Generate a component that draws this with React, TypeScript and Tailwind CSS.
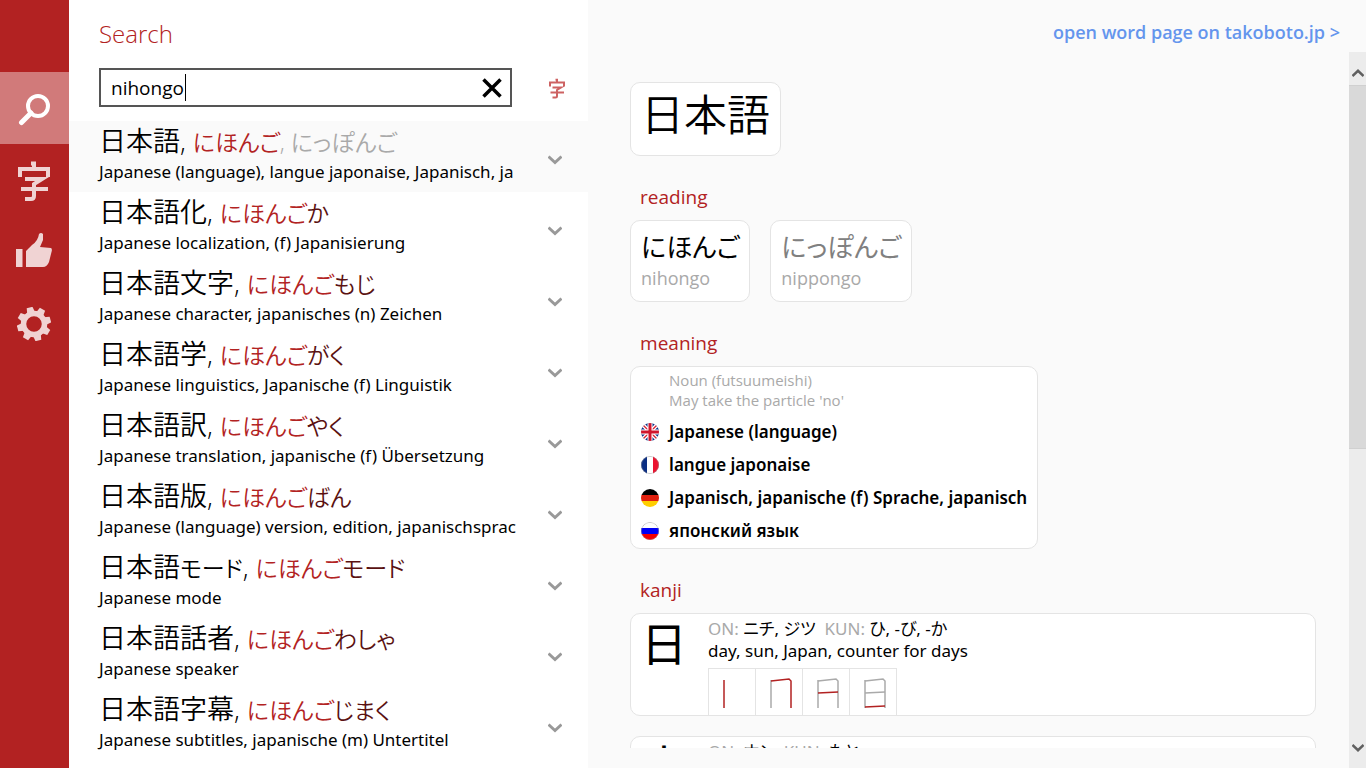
import { useState } from "react";

const WORDS = [
  { kanji: "日本語", match: "にほんご", rest: "", alt: "にっぽんご", meaning: "Japanese (language), langue japonaise, Japanisch, ja" },
  { kanji: "日本語化", match: "にほんご", rest: "か", meaning: "Japanese localization, (f) Japanisierung" },
  { kanji: "日本語文字", match: "にほんご", rest: "もじ", meaning: "Japanese character, japanisches (n) Zeichen" },
  { kanji: "日本語学", match: "にほんご", rest: "がく", meaning: "Japanese linguistics, Japanische (f) Linguistik" },
  { kanji: "日本語訳", match: "にほんご", rest: "やく", meaning: "Japanese translation, japanische (f) Übersetzung" },
  { kanji: "日本語版", match: "にほんご", rest: "ばん", meaning: "Japanese (language) version, edition, japanischsprac" },
  { kanji: "日本語", suffix: "モード", match: "にほんご", rest: "モード", meaning: "Japanese mode" },
  { kanji: "日本語話者", match: "にほんご", rest: "わしゃ", meaning: "Japanese speaker" },
  { kanji: "日本語字幕", match: "にほんご", rest: "じまく", meaning: "Japanese subtitles, japanische (m) Untertitel" },
];

const READINGS = [
  { kana: "にほんご", romaji: "nihongo", color: "text-black" },
  { kana: "にっぽんご", romaji: "nippongo", color: "text-[#808080]" },
];

const MEANINGS = [
  { flag: "gb", text: "Japanese (language)" },
  { flag: "fr", text: "langue japonaise" },
  { flag: "de", text: "Japanisch, japanische (f) Sprache, japanisch" },
  { flag: "ru", text: "японский язык" },
];

// stroke order of 日
const STROKES = ["M15 11V39", "M15 12L33 10L35 12V39", "M15 24L35 23", "M15 38L35 37"];

/* ICONS */
function KanjiIcon({ className }: { className?: string }) {
  return (
    <svg viewBox="0 -4 34 44" className={className} fill="none" stroke="currentColor" strokeWidth="4" aria-hidden="true">
      <path d="M14 1.500H17V7M3 15V7H31V15M8 17H25L17 22V34Q17 37 14 37H8M4 27H31" />
    </svg>
  );
}

function SearchIcon() {
  return (
    <svg viewBox="0 -4 32 36" className="h-9 w-8" fill="none" stroke="currentColor" aria-hidden="true">
      <circle cx="20" cy="12" r="10" strokeWidth="4" />
      <path d="M13 19L3.500 28.500" strokeWidth="5" strokeLinecap="round" />
    </svg>
  );
}

function ThumbIcon() {
  return (
    <svg viewBox="0 0 36 38" className="h-[38px] w-9" fill="currentColor" aria-hidden="true">
      <path d="M0 16H6.500V34H0Z" />
      <path d="M10 34V18L16 12Q22 8 23 1Q25 -1 27 1V7L24 14L35 15Q36.500 16 35.500 19L33 29Q31 34 27 34Z" />
    </svg>
  );
}

function GearIcon() {
  return (
    <svg viewBox="-17 -17 34 34" className="size-[34px]" fill="currentColor" aria-hidden="true">
      <circle r="10.500" fill="none" stroke="currentColor" strokeWidth="5.500" />
      {[-15, 30, 75, 120, 165, 210, 255, 300].map((a) => (
        <path key={a} d="M-4 -11L-3 -17H3L4 -11Z" transform={`rotate(${a})`} />
      ))}
    </svg>
  );
}

function Chevron({ className }: { className?: string }) {
  return (
    <svg viewBox="0 0 14 10" className={className} fill="none" stroke="currentColor" strokeWidth="3" aria-hidden="true">
      <path d="M0.500 1.500L7 7.500L13.500 1.500" />
    </svg>
  );
}

function Flag({ code }: { code: string }) {
  return (
    <svg viewBox="0 0 18 18" className="size-[18px] shrink-0 overflow-hidden rounded-full" role="img" aria-label={code}>
      {code === "gb" && (
        <>
          <rect width="18" height="18" fill="#0a2f86" />
          <path d="M0 0L18 18M18 0L0 18" stroke="#fff" strokeWidth="4" />
          <path d="M0 0L18 18M18 0L0 18" stroke="#d8202f" strokeWidth="1.300" />
          <path d="M9 0V18M0 9H18" stroke="#fff" strokeWidth="5" />
          <path d="M9 0V18M0 9H18" stroke="#d0142c" strokeWidth="3" />
        </>
      )}
      {code === "fr" && (
        <>
          <rect width="18" height="18" fill="#fff" />
          <rect width="6" height="18" fill="#0b2f83" />
          <rect x="12" width="6" height="18" fill="#ec1330" />
        </>
      )}
      {code === "de" && (
        <>
          <rect width="18" height="6" />
          <rect y="6" width="18" height="6" fill="#e1200f" />
          <rect y="12" width="18" height="6" fill="#ffce00" />
        </>
      )}
      {code === "ru" && (
        <>
          <rect width="18" height="18" fill="#fff" />
          <rect y="6" width="18" height="6" fill="#0000f5" />
          <rect y="12" width="18" height="6" fill="#f50000" />
        </>
      )}
      {(code === "fr" || code === "ru") && <circle cx="9" cy="9" r="8.700" fill="none" stroke="#999" strokeWidth="0.600" />}
    </svg>
  );
}

const NAV = [
  { label: "Search", icon: <SearchIcon /> },
  { label: "Kanji", icon: <KanjiIcon className="h-11 w-[34px]" /> },
  { label: "Rate", icon: <ThumbIcon /> },
  { label: "Settings", icon: <GearIcon /> },
];

function SectionTitle({ children }: { children: string }) {
  return <h2 className="px-[10px] text-[19px] leading-6 text-[#b22222]">{children}</h2>;
}

export default function App() {
  const [query, setQuery] = useState("nihongo");

  return (
    <div className="flex h-screen overflow-hidden bg-[#fafafa] font-['Open_Sans','Noto_Sans_CJK_JP',sans-serif] text-black">

      {/* SIDE BAR */}
      <nav className="flex w-[69px] shrink-0 flex-col bg-[#b22222] pt-[72px]">
        {NAV.map((item, i) => (
          <button
            key={item.label}
            aria-label={item.label}
            className={`flex h-[72px] items-center justify-center pr-[2px] ${i === 0 ? "bg-[#d17a7a] text-white" : "text-[#f0d3d3]"}`}
          >
            {item.icon}
          </button>
        ))}
      </nav>

      {/* SEARCH */}
      <section className="flex w-[38%] shrink-0 flex-col overflow-hidden bg-white">
        <h1 className="px-[30px] pt-[18px] text-[24px] leading-8 font-light text-[#b22222]">Search</h1>

        <div className="mt-[18px] mb-[14px] flex items-center pr-[21px] pl-[30px]">
          <div className="relative flex h-[39px] flex-1 items-center border-2 border-[#555]">
            <input
              type="text"
              aria-label="Search word"
              value={query}
              onChange={(e) => setQuery(e.target.value)}
              className="min-w-0 flex-1 bg-transparent px-[10px] text-[19px] leading-6 caret-transparent outline-none"
            />
            <span className="absolute left-[84px] h-[27px] w-px bg-black" />
            <button aria-label="Clear" onClick={() => setQuery("")} className="flex w-9 justify-center">
              <svg viewBox="0 0 20 20" className="size-5" stroke="currentColor" strokeWidth="3.500" aria-hidden="true">
                <path d="M1.500 1.500L18.500 18.500M18.500 1.500L1.500 18.500" />
              </svg>
            </button>
          </div>
          <button aria-label="Kanji search" className="ml-[35px] flex w-5 justify-center text-[#cd6262]">
            <KanjiIcon className="h-[22px] w-[18px]" />
          </button>
        </div>

        <ul>
          {WORDS.map((w, i) => (
            <li key={w.meaning} className={`flex items-center pr-[26px] pb-2 pl-[30px] ${i === 0 ? "bg-[#fafafa]" : ""}`}>
              <div className="min-w-0 flex-1 whitespace-nowrap">
                <p className="flex h-[39px] items-baseline text-[23px] leading-10 font-[350] whitespace-pre [font-feature-settings:'palt']">
                  <span className="text-[27px]">{w.kanji}</span>
                  {w.suffix}
                  <span className="text-[27px]">, </span>
                  <span className="text-[#b22222]">{w.match}</span>
                  <span className="text-[#5a1111]">{w.rest}</span>
                  {w.alt && <span className="text-[#a9a9a9]">, {w.alt}</span>}
                </p>
                <p className="font-['Noto_Sans',sans-serif] text-[17px] leading-6">{w.meaning}</p>
              </div>
              <button aria-label="Expand" className="ml-4 flex w-[14px] justify-center pt-[14px] text-[#999]">
                <Chevron className="h-[10px] w-[14px]" />
              </button>
            </li>
          ))}
        </ul>
      </section>

      {/* WORD DETAILS */}
      <main className="flex min-w-0 flex-1 flex-col">
        <header className="flex h-[52px] shrink-0 justify-end pt-5 pr-[26px]">
          <a href="#" className="text-lg leading-6 font-semibold text-[#6495ed]">open word page on takoboto.jp &gt;</a>
        </header>

        <div className="flex min-h-0 flex-1">
          <div className="mb-5 min-w-0 flex-1 overflow-hidden pt-[30px] pr-[33px] pl-[42px]">
            <div className="flex">
              <p className="rounded-[10px] border border-[#e4e4e4] bg-white px-[10px] pt-[3px] pb-[11px] text-[43px] leading-[58px] font-[350]">日本語</p>
            </div>

            <div className="mt-[29px]">
              <SectionTitle>reading</SectionTitle>
              <div className="mt-[11px] flex gap-5">
                {READINGS.map((r) => (
                  <div key={r.romaji} className="rounded-[10px] border border-[#e4e4e4] bg-white px-[10px] pt-[7px] pb-[11px]">
                    <p className={`text-[26px] leading-[38px] [font-feature-settings:'palt'] ${r.color}`}>{r.kana}</p>
                    <p className="text-lg leading-6 text-[#a9a9a9]">{r.romaji}</p>
                  </div>
                ))}
              </div>
            </div>

            <div className="mt-[29px]">
              <SectionTitle>meaning</SectionTitle>
              <div className="mt-[11px] flex">
                <div className="rounded-[10px] border border-[#e4e4e4] bg-white px-[10px] pt-[3px] pb-px">
                  <div className="pb-[5px] pl-7 text-[15px] leading-5 text-[#a9a9a9]">
                    <p>Noun (futsuumeishi)</p>
                    <p>May take the particle 'no'</p>
                  </div>
                  <ul>
                    {MEANINGS.map((m) => (
                      <li key={m.flag} className="flex h-[33px] items-center gap-[10px] font-['Noto_Sans',sans-serif] text-[17px] font-semibold">
                        <Flag code={m.flag} />
                        {m.text}
                      </li>
                    ))}
                  </ul>
                </div>
              </div>
            </div>

            <div className="mt-[29px]">
              <SectionTitle>kanji</SectionTitle>
              <article className="mt-[11px] flex gap-[21px] rounded-[10px] border border-[#e4e4e4] bg-white pl-[10px]">
                <p className="text-[46px] leading-[58px]">日</p>
                <div className="pt-1">
                  <p className="font-['Noto_Sans','Noto_Sans_CJK_JP',sans-serif] text-[17px] leading-[22px] [font-feature-settings:'palt']">
                    <span className="text-[#a9a9a9]">ON:</span> ニチ, ジツ&nbsp; <span className="text-[#a9a9a9]">KUN:</span> ひ, -び, -か
                  </p>
                  <p className="font-['Noto_Sans',sans-serif] text-[17px] leading-[22px]">day, sun, Japan, counter for days</p>
                  <div className="mt-[6px] flex w-max border-t border-l border-[#e4e4e4]">
                    {STROKES.map((s, i) => (
                      <svg key={s} viewBox="0 0 46 46" className="h-[46px] w-[47px] border-r border-[#e4e4e4]" fill="none" strokeWidth="1.500">
                        {STROKES.slice(0, i).map((d) => <path key={d} d={d} stroke="#aaa" />)}
                        <path d={s} stroke="#b22222" />
                      </svg>
                    ))}
                  </div>
                </div>
              </article>
              <article className="mt-5 flex gap-[21px] rounded-[10px] border border-[#e4e4e4] bg-white pl-[10px]">
                <p className="text-[46px] leading-[58px]">本</p>
                <div className="pt-1">
                  <p className="font-['Noto_Sans','Noto_Sans_CJK_JP',sans-serif] text-[17px] leading-[22px] [font-feature-settings:'palt']">
                    <span className="text-[#a9a9a9]">ON:</span> ホン&nbsp; <span className="text-[#a9a9a9]">KUN:</span> もと
                  </p>
                </div>
              </article>
            </div>
          </div>

          {/* SCROLL BAR */}
          <div className="flex w-[17px] shrink-0 flex-col bg-[#ececec] text-[#606060]">
            <button aria-label="Scroll up" className="flex h-[33px] shrink-0 items-center justify-center pt-2">
              <Chevron className="h-[10px] w-3 rotate-180" />
            </button>
            <div className="min-h-0 flex-1">
              <div className="h-[56%] border-y border-[#d0d0d0] bg-[#d9d9d9]" />
            </div>
            <button aria-label="Scroll down" className="flex h-[33px] shrink-0 items-center justify-center pb-2">
              <Chevron className="h-[10px] w-3" />
            </button>
          </div>
        </div>
      </main>
    </div>
  );
}
